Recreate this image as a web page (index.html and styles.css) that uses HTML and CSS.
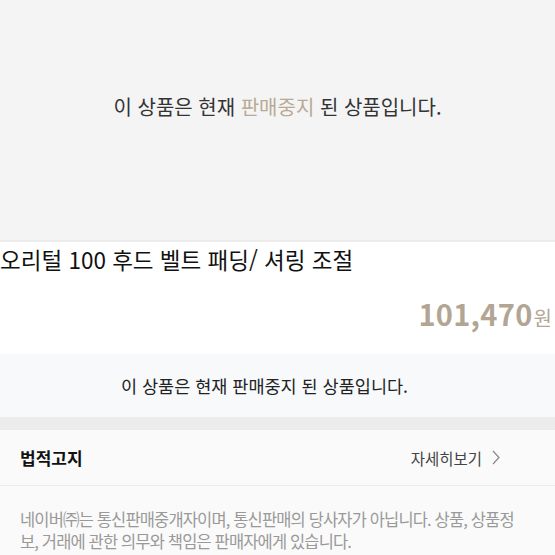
FILE: index.html
```html
<!DOCTYPE html>
<html lang="ko">

<head>
    <meta charset="UTF-8">
    <meta name="viewport" content="width=device-width, initial-scale=1.0">
    <title>상품 상세</title>
    <link rel="stylesheet" href="styles.css">
</head>

<body>

    <div class="soldout-cover">
        <p>이 상품은 현재 <span class="accent">판매중지</span> 된 상품입니다.</p>
    </div>

    <div class="product">
        <h1 class="product-title">오리털 100 후드 벨트 패딩/ 셔링 조절</h1>
        <div class="price">
            <span class="price-num">101,470</span><span class="price-unit">원</span>
        </div>
    </div>

    <div class="soldout-bar">
        <p>이 상품은 현재 판매중지 된 상품입니다.</p>
    </div>

    <div class="divider"></div>

    <div class="legal">
        <div class="legal-head">
            <h2>법적고지</h2>
            <a class="more" href="#">자세히보기
                <svg width="8" height="15" viewBox="0 0 8 15">
                    <path d="M1 1l6 6.5-6 6.5" fill="none" stroke="#888" stroke-width="1.2"/>
                </svg>
            </a>
        </div>
        <p class="legal-text">네이버㈜는 통신판매중개자이며, 통신판매의 당사자가 아닙니다. 상품, 상품정보, 거래에 관한 의무와 책임은 판매자에게 있습니다.</p>
    </div>

</body>

</html>
```

FILE: styles.css
```css
* {
    box-sizing: border-box;
    margin: 0;
    padding: 0;
}

body {
    background-color: #fafafa;
    font-family: 'Noto Sans CJK KR', 'Noto Sans', sans-serif;
    color: #222;
}

.soldout-cover {
    height: 242px;
    padding-top: 93px;
    background-color: #f4f4f4;
    border-bottom: 2px solid #ebebeb;
    text-align: center;
}

.soldout-cover p {
    font-size: 20px;
    line-height: 28px;
    color: #333;
}

.soldout-cover .accent {
    color: #b9a995;
}

.product {
    background-color: #fff;
    padding: 2px 0 0;
    height: 112px;
}

.product-title {
    font-size: 22.5px;
    font-weight: 400;
    line-height: 30px;
    color: #111;
}

.price {
    display: flex;
    justify-content: flex-end;
    align-items: baseline;
    padding: 18px 3px 0 0;
}

.price-num {
    font-size: 29px;
    font-weight: 700;
    color: #b3a594;
    letter-spacing: 0.3px;
}

.price-unit {
    font-size: 20px;
    color: #b3a594;
    margin-left: 1px;
}

.soldout-bar {
    height: 63px;
    display: flex;
    justify-content: center;
    align-items: center;
    padding-right: 26px;
    background-color: #f7f9fb;
}

.soldout-bar p {
    font-size: 17.5px;
    color: #222;
}

.divider {
    height: 13px;
    background-color: #ececec;
}

.legal {
    background-color: #fafafa;
}

.legal-head {
    height: 56px;
    padding: 0 55px 0 20px;
    display: flex;
    justify-content: space-between;
    align-items: center;
    border-bottom: 1px solid #ececec;
}

.legal-head h2 {
    font-size: 17px;
    font-weight: 700;
    color: #111;
}

.more {
    display: flex;
    align-items: center;
    gap: 10px;
    font-size: 15.5px;
    color: #444;
    text-decoration: none;
}

.legal-text {
    padding: 22px 30px 0 20px;
    font-size: 16.5px;
    line-height: 22px;
    color: #999;
    letter-spacing: -0.85px;
}
```
